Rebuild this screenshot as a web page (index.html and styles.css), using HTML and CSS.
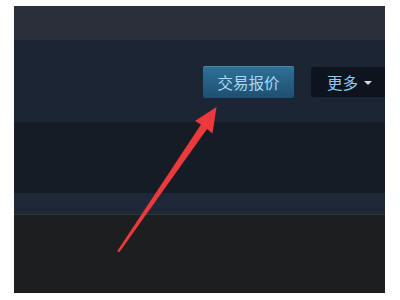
FILE: index.html
```html
<!DOCTYPE html>
<html>
<head>
<meta charset="utf-8">
<link rel="stylesheet" href="styles.css">
</head>
<body>
<div class="frame">
  <div class="band band-top"></div>
  <div class="band band-nav">
    <button class="btn btn-trade">交易报价</button>
    <button class="btn btn-more">更多<span class="caret"></span></button>
  </div>
  <div class="band band-dark"></div>
  <div class="band band-strip"></div>
  <div class="band band-bottom"></div>
</div>
<svg class="arrow" width="400" height="300" viewBox="0 0 400 300">
  <polygon points="216.5,107 212.5,133.5 207,129 119.5,252 117,251.5 201,124.5 195,121" fill="#ec3a3c"/>
</svg>
</body>
</html>
```
FILE: styles.css
```css
html, body {
  margin: 0;
  padding: 0;
  background: #ffffff;
  width: 400px;
  height: 300px;
  overflow: hidden;
}
.frame {
  margin: 6px 15px 0 14px;
  width: 371px;
  height: 287px;
  overflow: hidden;
  display: flex;
  flex-direction: column;
  font-family: "Noto Sans CJK SC", "Noto Sans", sans-serif;
}
.band { flex: none; }
.band-top { height: 34px; background: #2b2f3a; }
.band-nav {
  height: 82px;
  background: #1c2534;
  display: flex;
  justify-content: flex-end;
  align-items: flex-start;
  gap: 17px;
  padding-top: 26px;
  box-sizing: border-box;
  margin-right: -2px;
}
.band-dark { height: 71px; background: #161c26; }
.band-strip { height: 21px; background: #1e2839; border-bottom: 1px solid #2e3836; }
.band-bottom { flex: 1; background: #1d1e20; }
.btn {
  border: none;
  font-family: inherit;
  font-size: 15.5px;
  line-height: 20px;
  height: 32px;
  border-radius: 2px;
  padding: 0;
  display: flex;
  align-items: center;
  justify-content: center;
}
.btn-trade {
  width: 91px;
  background: linear-gradient(#2f7199, #1f4e70);
  color: #a9d9f3;
  box-shadow: inset 0 1px 0 rgba(120, 180, 220, 0.35);
}
.btn-more {
  width: 76px;
  height: 30px;
  margin-top: 1px;
  background: #0e141e;
  color: #8ccaf0;
  justify-content: flex-start;
  padding-left: 16px;
}
.caret {
  display: inline-block;
  width: 0;
  height: 0;
  margin-left: 6px;
  margin-top: 2px;
  border-left: 4px solid transparent;
  border-right: 4px solid transparent;
  border-top: 4px solid #d4dbe2;
}
.arrow {
  position: absolute;
  left: 0;
  top: 0;
}
```
